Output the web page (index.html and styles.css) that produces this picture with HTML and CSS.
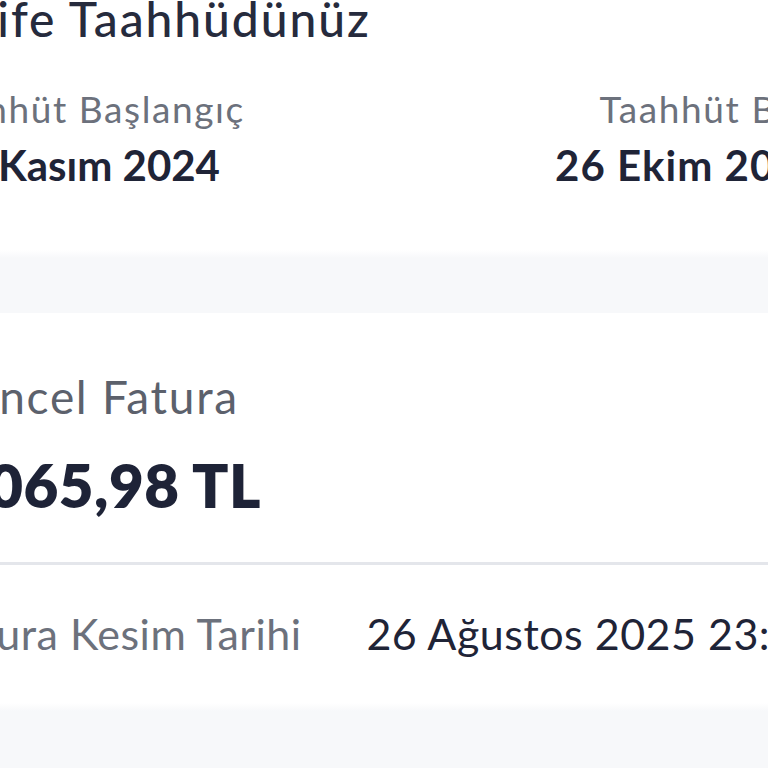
FILE: index.html
```html
<!DOCTYPE html>
<html lang="tr">
<head>
    <meta charset="UTF-8">
    <meta name="viewport" content="width=device-width, initial-scale=1.0">
    <title>Taahhüt ve Fatura</title>
    <link rel="stylesheet" href="styles.css">
</head>
<body>
    <div class="screen">
        <section class="card commitment">
            <h2 class="card-title">Tarife Taahhüdünüz</h2>
            <div class="dates">
                <div class="date date-start">
                    <span class="label">Taahhüt Başlangıç</span>
                    <span class="date-value">27 Kasım 2024</span>
                </div>
                <div class="date date-end">
                    <span class="label">Taahhüt Bitiş</span>
                    <span class="date-value">26 Ekim 2026</span>
                </div>
            </div>
        </section>

        <div class="spacer"></div>

        <section class="card invoice">
            <div class="invoice-head">
                <span class="invoice-label">Güncel Fatura</span>
                <span class="invoice-amount">1.065,98 TL</span>
            </div>
            <div class="invoice-row">
                <span class="label row-label">Fatura Kesim Tarihi</span>
                <span class="row-value">26 Ağustos 2025 23:59</span>
            </div>
        </section>

        <div class="spacer"></div>
    </div>
</body>
</html>
```

FILE: styles.css
```css
body {
    margin: 0;
    overflow: hidden;
    background: #f7f8fa;
    font-family: Lato, "Noto Sans", sans-serif;
    color: #222839;
}

.screen {
    width: 918px;
    margin-left: -100px;
}

.card {
    background: #fff;
}

.commitment {
    padding: 0 5px 64px 0;
}

.card-title {
    margin: -5px 0 0 27px;
    font-size: 48px;
    line-height: 48px;
    font-weight: 500;
    letter-spacing: 1.9px;
    color: #262b3d;
}

.dates {
    display: flex;
    justify-content: space-between;
    margin-top: 47px;
}

.date {
    display: flex;
    flex-direction: column;
    gap: 17px;
}

.date-start {
    margin-left: 27px;
}

.date-end {
    align-items: flex-end;
    margin-right: -13px;
}

.label {
    font-size: 37px;
    line-height: 37px;
    letter-spacing: 1.6px;
    color: #6c717c;
}

.date-end .label {
    margin-right: -4px;
}

.date-value {
    font-size: 42px;
    line-height: 42px;
    font-weight: 700;
    color: #1f2437;
}

.date-start .date-value {
    margin-left: 12px;
}

.date-end .date-value {
    letter-spacing: 1px;
}

.spacer {
    height: 63px;
    background: linear-gradient(#fff, #f7f8fa 8px);
}

.invoice {
    padding: 61px 0 48px;
}

.invoice-head {
    display: flex;
    flex-direction: column;
    gap: 35px;
    padding: 0 0 47px 37px;
    border-bottom: 3px solid #e4e6eb;
}

.invoice-label {
    font-size: 46px;
    line-height: 46px;
    letter-spacing: 1.7px;
    color: #5c616c;
}

.invoice-amount {
    margin-left: 1px;
    font-size: 60px;
    line-height: 60px;
    font-weight: 800;
    letter-spacing: 0.5px;
    color: #1e2337;
}

.invoice-row {
    display: flex;
    justify-content: space-between;
    align-items: baseline;
    padding: 47px 0 0 37px;
}

.row-label {
    font-size: 43px;
    line-height: 43px;
    letter-spacing: 0.5px;
}

.row-value {
    margin-right: -3px;
    font-size: 43px;
    line-height: 43px;
    letter-spacing: 0.5px;
    color: #1f2437;
}
```
